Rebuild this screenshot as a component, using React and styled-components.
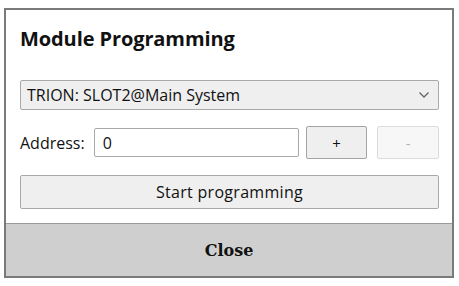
import styled, { createGlobalStyle } from 'styled-components';

const GlobalStyle = createGlobalStyle`
  body {
    margin: 0;
    background: #ffffff;
    font-family: "Open Sans", Lato, sans-serif;
  }
`;

export default function App() {
    return (
        <>
            <GlobalStyle />
            <Dialog>
                <Dialog.Body>
                    <Dialog.Title>Module Programming</Dialog.Title>
                    <Select>
                        <span>TRION: SLOT2@Main System</span>
                        <svg width="12" height="8" viewBox="0 0 12 8">
                            <path d="M1.5 1.5 L6 6 L10.5 1.5" fill="none" stroke="#666" strokeWidth="1.3" />
                        </svg>
                    </Select>
                    <AddressRow>
                        <Label>Address:</Label>
                        <Input defaultValue="0" />
                        <StepButton>+</StepButton>
                        <StepButton disabled>-</StepButton>
                    </AddressRow>
                    <WideButton>Start programming</WideButton>
                </Dialog.Body>
                <Dialog.Footer>Close</Dialog.Footer>
            </Dialog>
        </>
    );
}

const Dialog = styled.div`
  box-sizing: border-box;
  margin: 8px 0 0 4px;
  width: 450px;
  height: 270px;
  border: 2px solid #7a7a7a;
  display: flex;
  flex-direction: column;
  background: #ffffff;
`;

Dialog.Body = styled.div`
  flex: 1;
  padding: 15px 13px 0 14px;
  display: flex;
  flex-direction: column;
`;

Dialog.Title = styled.div`
  font-size: 20px;
  font-weight: 700;
  color: #111;
  height: 27px;
  line-height: 27px;
  margin-bottom: 28px;
  letter-spacing: -0.1px;
`;

Dialog.Footer = styled.div`
  height: 52px;
  border-top: 1px solid #9a9a9a;
  background: #cfcfcf;
  display: flex;
  align-items: center;
  justify-content: center;
  font-family: "DejaVu Serif", serif;
  font-weight: 700;
  font-size: 16px;
  color: #111;
`;

const Select = styled.div`
  box-sizing: border-box;
  height: 30px;
  border: 1px solid #a9a9a9;
  border-radius: 2px;
  background: #efefef;
  display: flex;
  align-items: center;
  justify-content: space-between;
  padding: 0 8px 0 6px;
  font-size: 16px;
  color: #111;
`;

const AddressRow = styled.div`
  display: flex;
  align-items: center;
  margin-top: 16px;
  height: 33px;
`;

const Label = styled.span`
  font-size: 16px;
  color: #111;
  width: 74px;
`;

const Input = styled.input`
  box-sizing: border-box;
  width: 205px;
  height: 29px;
  border: 1px solid #a9a9a9;
  border-radius: 2px;
  padding: 0 8px;
  font-family: inherit;
  font-size: 16px;
  color: #111;
  outline: none;
`;

const StepButton = styled.button`
  box-sizing: border-box;
  height: 33px;
  width: 62px;
  margin-left: 7px;
  border: 1px solid ${p => p.disabled ? '#dcdcdc' : '#a4a4a4'};
  border-radius: 2px;
  background: ${p => p.disabled ? '#f7f7f7' : '#efefef'};
  color: ${p => p.disabled ? '#b5b5b5' : '#111'};
  font-family: inherit;
  font-size: 15px;
  padding: 0;
  & + & {
    margin-left: 10px;
  }
`;

const WideButton = styled.button`
  box-sizing: border-box;
  margin-top: 16px;
  height: 34px;
  width: 100%;
  border: 1px solid #a9a9a9;
  border-radius: 2px;
  background: #efefef;
  font-family: inherit;
  font-size: 16px;
  letter-spacing: 0.3px;
  color: #111;
  padding: 0;
`;
